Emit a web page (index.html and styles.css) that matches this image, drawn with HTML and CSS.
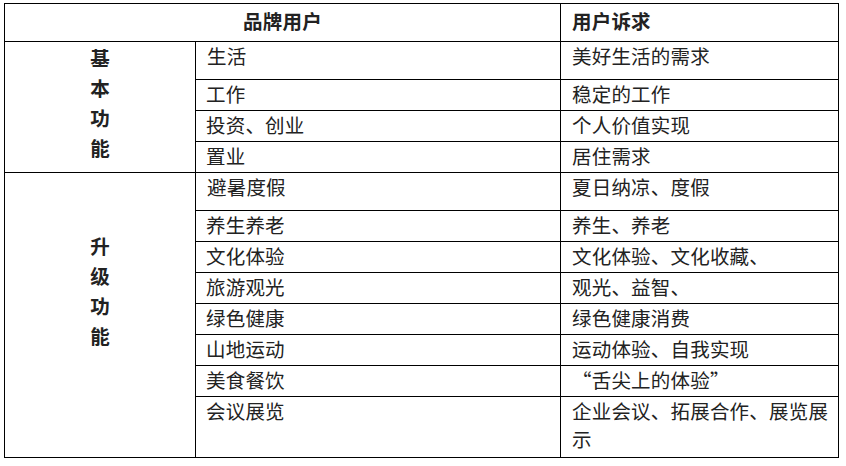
FILE: index.html
```html
<!DOCTYPE html>
<html lang="zh-CN">
<head>
<meta charset="utf-8">
<title>品牌用户</title>
<link rel="stylesheet" href="styles.css">
</head>
<body>
<table class="grid">
  <colgroup>
    <col class="c1">
    <col class="c2">
    <col class="c3">
  </colgroup>
  <tr class="r-head">
    <th colspan="2" class="head center">品牌用户</th>
    <th class="head">用户诉求</th>
  </tr>
  <tr class="r-tall">
    <td rowspan="4" class="group g1">基<br>本<br>功<br>能</td>
    <td>生活</td>
    <td>美好生活的需求</td>
  </tr>
  <tr class="r-std">
    <td>工作</td>
    <td>稳定的工作</td>
  </tr>
  <tr class="r-std">
    <td>投资、创业</td>
    <td>个人价值实现</td>
  </tr>
  <tr class="r-std">
    <td>置业</td>
    <td>居住需求</td>
  </tr>
  <tr class="r-tall">
    <td rowspan="8" class="group g2">升<br>级<br>功<br>能</td>
    <td>避暑度假</td>
    <td>夏日纳凉、度假</td>
  </tr>
  <tr class="r-std">
    <td>养生养老</td>
    <td>养生、养老</td>
  </tr>
  <tr class="r-std">
    <td>文化体验</td>
    <td>文化体验、文化收藏、</td>
  </tr>
  <tr class="r-std">
    <td>旅游观光</td>
    <td>观光、益智、</td>
  </tr>
  <tr class="r-std">
    <td>绿色健康</td>
    <td>绿色健康消费</td>
  </tr>
  <tr class="r-std">
    <td>山地运动</td>
    <td>运动体验、自我实现</td>
  </tr>
  <tr class="r-std">
    <td>美食餐饮</td>
    <td>“舌尖上的体验”</td>
  </tr>
  <tr class="r-last">
    <td>会议展览</td>
    <td>企业会议、拓展合作、展览展示</td>
  </tr>
</table>
</body>
</html>
```
FILE: styles.css
```css
html, body {
  margin: 0;
  padding: 0;
  background: #ffffff;
}

body {
  padding: 3px 0 0 4px;
  font-family: "Noto Sans CJK SC", "Noto Sans", sans-serif;
  color: #222222;
}

.grid {
  border-collapse: collapse;
  table-layout: fixed;
  width: 834px;
  font-size: 19.5px;
  letter-spacing: 0.2px;
  line-height: 28px;
}

.c1 { width: 191px; }
.c2 { width: 365px; }
.c3 { width: 278px; }

.grid th,
.grid td {
  border: 1px solid #000;
  padding: 0 4px 0 10px;
  vertical-align: top;
  text-align: left;
  font-weight: normal;
}

.grid td + td {
  padding-left: 11px;
}

.grid .head {
  font-weight: 600;
  line-height: 29px;
  padding-top: 2px;
}

.grid .head.center {
  text-align: center;
  padding-left: 0;
  padding-right: 0;
}

.grid th + th {
  padding-left: 11px;
}

.r-head { height: 38px; }
.r-tall { height: 38px; }
.r-std { height: 31px; }
.r-last { height: 61px; }

.grid .group {
  font-weight: 600;
  text-align: center;
  line-height: 30px;
  padding-left: 0;
  padding-right: 0;
}

.grid .g1 { padding-top: 1px; }
.grid .g2 { padding-top: 58px; }
```
